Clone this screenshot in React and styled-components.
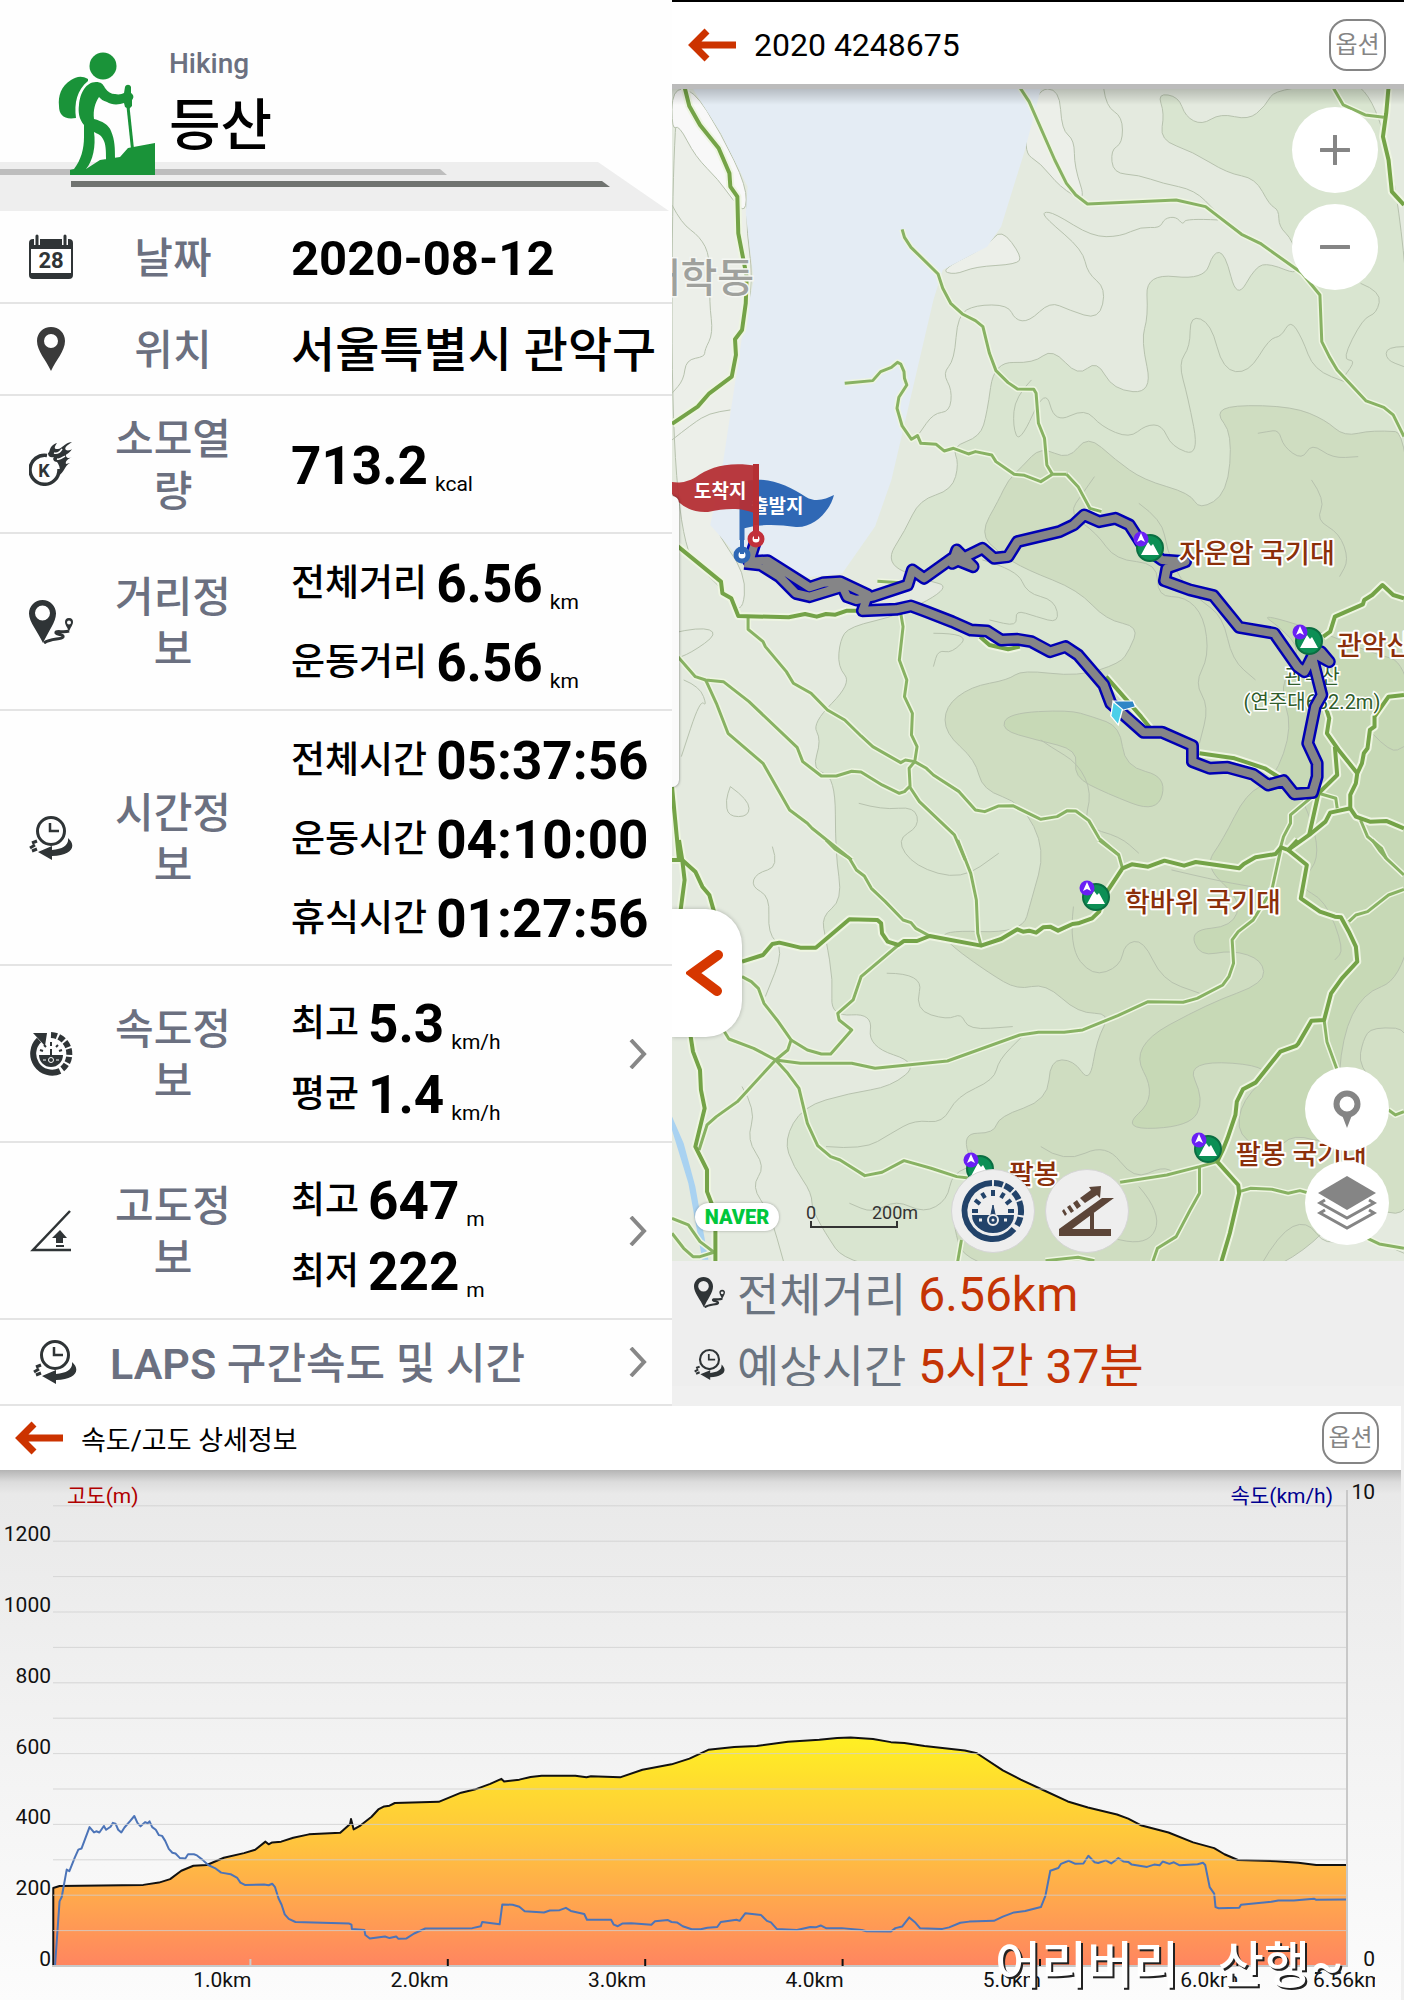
import React from "react";
import styled, { createGlobalStyle } from "styled-components";

const GlobalStyle = createGlobalStyle`
  * {
    box-sizing: border-box;
  }
  body {
    margin: 0;
    background: #f0f0f0;
    color: #000;
    font-family: Roboto, "Noto Sans CJK KR", sans-serif;
  }
  button {
    font-family: inherit;
    cursor: pointer;
  }
  h1, h2, p, ul, dl, dd {
    margin: 0;
    padding: 0;
  }
`;

const Page = styled.div`
  display: flex;
  flex-direction: column;
`;

const Panels = styled.div`
  display: grid;
  grid-template-columns: 672fr 732fr;
`;

const Summary = styled.section`
  background: #fefefe;
  min-width: 0;
`;

const ActivityHeader = styled.header`
  position: relative;
  display: flex;
  gap: 14px;
  height: 211px;
  padding: 52px 0 0 58px;
`;

const Banner = styled.svg`
  position: absolute;
  left: 0;
  bottom: 0;
  width: 100%;
  height: auto;
`;

const HikerIcon = styled.svg`
  position: relative;
  width: 97px;
  height: 124px;
`;

const ActivityTitles = styled.div`
  position: relative;
  margin-top: -8px;
`;

const ActivityType = styled.p`
  color: #6b7080;
  font-size: 28px;
  font-weight: 500;
  line-height: 40px;
`;

const ActivityName = styled.h1`
  font-size: 56px;
  font-weight: 500;
  line-height: 84px;
`;

const InfoRow = styled.div`
  display: grid;
  grid-template-columns: 104px 138px 1fr auto;
  align-items: center;
  height: ${(props) => props.$height}px;
  padding-right: 25px;
  border-bottom: 2px solid #e4e4e4;
`;

const LapsRow = styled(InfoRow)`
  grid-template-columns: 110px 1fr auto;
`;

const IconCell = styled.div`
  display: flex;
  padding-left: ${(props) => (props.$indent ? 33 : 29)}px;
`;

const InfoLabel = styled.h2`
  padding-top: 4px;
  color: #6b7080;
  font-size: ${(props) => (props.$wide ? 43 : 42)}px;
  font-weight: 500;
  line-height: 52px;
  text-align: ${(props) => (props.$wide ? "left" : "center")};
  word-break: break-all;

  strong {
    font-weight: 600;
  }
`;

const Values = styled.div`
  padding: ${(props) => (props.$low ? 12 : 4)}px 0 0 49px;
  white-space: nowrap;
`;

const ValueLine = styled.p`
  display: flex;
  align-items: center;
  height: ${(props) => props.$height}px;
`;

const ValueName = styled.span`
  margin-right: 9px;
  font-size: 37px;
  font-weight: 500;
  line-height: 52px;
`;

const numberSizes = { date: 49, place: 48, value: 53 };

const ValueNumber = styled.strong`
  font-size: ${(props) => numberSizes[props.$kind]}px;
  font-weight: ${(props) => (props.$kind === "place" ? 500 : 700)};
  line-height: 60px;
`;

const Unit = styled.span`
  margin: 36px 0 0 7px;
  font-size: 21px;
  line-height: 26px;
`;

const MoreButton = styled.button`
  display: flex;
  padding: 0;
  border: 0;
  background: none;
`;

const MapPanel = styled.section`
  display: flex;
  flex-direction: column;
  min-width: 0;
`;

const AppBar = styled.header`
  display: flex;
  align-items: center;
  height: ${(props) => (props.$chart ? 64 : 89)}px;
  padding: ${(props) => (props.$chart ? "0 22px 0 15px" : "4px 18px 0 16px")};
  background: #fff;
  border-top: ${(props) => (props.$chart ? "0" : "2px solid #000")};
  border-bottom: ${(props) => (props.$chart ? "0" : "5px solid #bbb")};
`;

const BackButton = styled.button`
  display: flex;
  padding: 0;
  border: 0;
  background: none;
`;

const BarTitle = styled.h2`
  flex: 1;
  margin-left: 18px;
  font-size: ${(props) => (props.$small ? 27 : 32)}px;
  font-weight: 400;
`;

const OptionButton = styled.button`
  width: 57px;
  height: 52px;
  padding: 0;
  border: 2px solid #858585;
  border-radius: 18px;
  background: #fff;
  color: #858585;
  font-size: 24px;
  line-height: 24px;
`;

const MapArea = styled.div`
  position: relative;
  overflow: hidden;
`;

const MapSvg = styled.svg`
  display: block;
  width: 100%;
  height: auto;
`;

const BarShadow = styled.div`
  position: absolute;
  top: 0;
  left: 0;
  right: 0;
  height: 16px;
  background: linear-gradient(rgba(0, 0, 0, 0.2), rgba(0, 0, 0, 0));
`;

const ZoomControls = styled.div`
  position: absolute;
  top: 18px;
  right: 26px;
  display: flex;
  flex-direction: column;
  gap: 11px;
`;

const LayerControls = styled.div`
  position: absolute;
  right: 15px;
  bottom: 16px;
  display: flex;
  flex-direction: column;
  gap: 10px;
`;

const GraphControls = styled.div`
  position: absolute;
  left: 279px;
  bottom: 8px;
  display: flex;
  gap: 10px;
`;

const RoundButton = styled.button`
  display: flex;
  align-items: center;
  justify-content: center;
  width: ${(props) => props.$size}px;
  height: ${(props) => props.$size}px;
  padding: 0;
  border: ${(props) => (props.$gray ? "1px solid #d5d5d5" : "0")};
  border-radius: 50%;
  background: ${(props) => (props.$gray ? "#eee" : "#fff")};
`;

const DrawerTab = styled.button`
  position: absolute;
  left: 0;
  top: 820px;
  display: flex;
  align-items: center;
  width: 70px;
  height: 128px;
  padding: 0 0 0 14px;
  border: 0;
  border-radius: 0 36px 36px 0;
  background: #fff;
  box-shadow: 0 0 4px rgba(0, 0, 0, 0.25);
`;

const DrawerEdge = styled.div`
  position: absolute;
  left: 0;
  top: 407px;
  width: 7px;
  height: 291px;
  border-radius: 0 8px 8px 0;
  background: #fafafa;
  box-shadow: 0 0 3px rgba(0, 0, 0, 0.5);
`;

const NaverBadge = styled.a`
  position: absolute;
  left: 23px;
  bottom: 30px;
  width: 84px;
  height: 28px;
  border-radius: 14px;
  background: #fff;
  box-shadow: 0 0 3px rgba(0, 0, 0, 0.3);
  color: #00c73c;
  font-size: 20px;
  font-weight: 900;
  line-height: 28px;
  text-align: center;
  text-decoration: none;
`;

const TripInfo = styled.dl`
  height: 125px;
  overflow: hidden;
  padding: 0 22px;
  background: #eee;
`;

const TripLine = styled.div`
  display: flex;
  align-items: center;
  height: 72px;
  font-size: 46px;
  line-height: 68px;
  white-space: nowrap;

  svg {
    margin-bottom: 10px;
  }
  dt {
    margin: 0 12px 4px;
    color: #6b7480;
  }
  dd {
    margin-bottom: 4px;
    color: #c43405;
    font-size: 48px;
  }
`;

const ChartPanel = styled.section`
  border-right: 3px solid #f0f0f0;
  background: #fff;
`;

const ChartArea = styled.div`
  background: linear-gradient(#b4b4b4, #dcdcdc 12px, #e9e9e9 24px, #eee 30%, #fcfcfc);
`;

const ChartSvg = styled.svg`
  display: block;
  width: 100%;
  height: auto;
`;

const Signature = styled.g`
  fill: #fff;
  font-size: 50px;
  font-weight: 500;
  filter: drop-shadow(2px 2px 0 #222);
`;

/* ---------- icons ---------- */

const dark = "#2f3436";

const CalendarIcon = () => (
  <svg width="44" height="46" viewBox="0 0 44 46">
    <rect x="1" y="6" width="42" height="38" rx="3" fill="#fff" stroke={dark} strokeWidth="2" />
    <path d="M1 6h42v9H1zM1 39h42v5H1z" fill={dark} />
    <path d="M8 2v9M36 2v9" stroke="#fff" strokeWidth="6" />
    <path d="M8 2v9M36 2v9" stroke={dark} strokeWidth="3" strokeLinecap="round" />
    <text x="22" y="34" fontSize="22" fontWeight="700" textAnchor="middle" fill={dark}>28</text>
  </svg>
);

const PlaceIcon = () => (
  <svg width="44" height="44" viewBox="0 0 44 44">
    <path
      d="M22 0C14 0 8 6 8 14c0 10 9 19 14 30 5-11 14-20 14-30C36 6 30 0 22 0zm0 7a7 7 0 1 1 0 14 7 7 0 0 1 0-14z"
      fill="#3a3a3a"
      fillRule="evenodd"
    />
  </svg>
);

const CalorieIcon = () => (
  <svg width="44" height="44" viewBox="0 0 44 44">
    <path d="M18 13.500A14.500 14.500 0 1 0 30 27" fill="none" stroke={dark} strokeWidth="3.500" />
    <path
      d="M19 11c3-1 0-7 9-10-3 4-3 6 0 6 5 1 6-6 15-7-6 4-8 6-6 8 2 1 5 0 6-1-3 5-7 5-6 7 1 3 4 2 6 1-4 2-7 4-6 7l4-1c-6 3-5 9-12 13 3-5 2-10-1-14-3 0-5-3-3-5-3 1-6 0-6-4z"
      fill={dark}
    />
    <path d="M25 11c3 1 6-1 8-4M28 17c3 1 5-1 8-3" stroke="#fff" strokeWidth="1.500" fill="none" />
    <text x="15" y="35" fontSize="18" fontWeight="700" textAnchor="middle" fill={dark}>K</text>
  </svg>
);

const DistanceIcon = ({ size = 44 }) => (
  <svg width={size} height={size} viewBox="0 0 44 44">
    <path
      d="M13.500 0C6 0 0 6 0 13.500 0 22 9 32 14 43c5-11 13-21 13-29.500C27 6 21 0 13.500 0zm0 5.500a7.500 7.500 0 1 1 0 15 7.500 7.500 0 0 1 0-15z"
      fill={dark}
      fillRule="evenodd"
    />
    <path
      d="M40 18c-3 0-4 2-4 4 0 3 3 6 4 10 1-4 4-7 4-10 0-2-1-4-4-4zm0 2.500a2 2 0 1 1 0 4 2 2 0 0 1 0-4z"
      fill={dark}
      fillRule="evenodd"
    />
    <path d="M40 31c-5 2-14-1-13 2 1 2 8 1 7 4-2 3-12 1-19 6" fill="none" stroke={dark} strokeWidth="3" />
  </svg>
);

const TimeIcon = ({ size = 44 }) => (
  <svg width={size} height={size} viewBox="0 0 44 44">
    <circle cx="22" cy="15" r="13.500" fill="none" stroke={dark} strokeWidth="3" />
    <path d="M21 7v8h9" fill="none" stroke={dark} strokeWidth="2.500" />
    <path d="M39 22c9 8 4 17-16 18v4L9 36l14-6v4c11-1 17-5 16-12z" fill={dark} />
    <path d="M8 25l-5 2M6 29l-5 3M8 33l-5 2" stroke={dark} strokeWidth="3" />
  </svg>
);

const SpeedIcon = () => (
  <svg width="44" height="44" viewBox="0 0 44 44">
    <path d="M10 8A19 19 0 0 0 31 39" fill="none" stroke={dark} strokeWidth="6" />
    <path d="M4 1h14l-2 13z" fill={dark} />
    <path d="M22 3a19 19 0 0 1 11 34" fill="none" stroke={dark} strokeWidth="6" strokeDasharray="6 2" />
    <path d="M10 23h24a12 12 0 0 1-24 0z" fill={dark} />
    <path d="M11 18l3 1M15 13l2 2M22 10v4M29 13l-2 2M33 18l-3 1" stroke={dark} strokeWidth="2" />
    <path d="M22 17v9" stroke={dark} strokeWidth="2" />
    <circle cx="22" cy="28" r="2.500" fill={dark} stroke="#fff" />
    <path d="M14 28h3M27 28h3" stroke="#fff" />
  </svg>
);

const AltitudeIcon = () => (
  <svg width="44" height="44" viewBox="0 0 44 44">
    <path d="M41 2L4 41h38" fill="none" stroke={dark} strokeWidth="2.500" />
    <path d="M31 21l7 8h-4v5h-7v-5h-4zM27 36h8v2h-8z" fill={dark} />
  </svg>
);

const ChevronRight = () => (
  <svg width="18" height="30" viewBox="0 0 18 30">
    <path d="M2 1l13 14L2 29" fill="none" stroke="#878787" strokeWidth="4" />
  </svg>
);

const BackArrow = () => (
  <svg width="48" height="34" viewBox="0 0 48 34">
    <path d="M19 3L5 17l14 14M5 17h43" fill="none" stroke="#cc3300" strokeWidth="7" />
  </svg>
);

const GaugeIcon = () => (
  <svg width="64" height="64" viewBox="0 0 64 64" fill="none" stroke="#22436a">
    <path d="M31 4a28 28 0 1 0 22 46" strokeWidth="6" />
    <path d="M33 4a28 28 0 0 1 22 44" strokeWidth="6" strokeDasharray="9 2 9 2 9 2 14 2" />
    <path d="M11 36h42a21 18 0 0 1-42 0z" fill="#22436a" stroke="none" />
    <path
      d="M11 32h6M14 21l5 4M21 14l3 5M32 11v6M43 14l-3 5M50 21l-5 4M53 32h-6"
      strokeWidth="4"
    />
    <path d="M32 26l3 14h-6z" fill="#22436a" stroke="#22436a" />
    <circle cx="32" cy="41" r="5" fill="#22436a" stroke="#eee" strokeWidth="2" />
    <circle cx="32" cy="41" r="1.500" fill="#eee" stroke="none" />
    <path d="M18 41h3M43 41h3" stroke="#eee" strokeWidth="3" />
  </svg>
);

const SlopeIcon = () => (
  <svg width="56" height="50" viewBox="0 0 56 50" fill="#5c4538">
    <path d="M0 43L43 12h12L13 43h39v7H0z" />
    <path d="M31 27h4v17h-4z" />
    <path d="M21 12l11-8-2-3 12-1-1 12-3-3-12 8zM14 17l4-3 4 6-4 3zM8 21l3-2 4 6-3 2zM3 25l2-2 3 5-2 2z" />
  </svg>
);

const PinIcon = () => (
  <svg width="28" height="38" viewBox="0 0 28 38">
    <circle cx="14" cy="14" r="10.500" fill="none" stroke="#858585" strokeWidth="6" />
    <path d="M9 25h10l-5 13z" fill="#858585" />
  </svg>
);

const LayersIcon = () => (
  <svg width="60" height="54" viewBox="0 0 60 54">
    <path d="M30 0l29 17-29 17L1 17z" fill="#858585" />
    <path d="M8 24l-5 3 27 15 27-15-5-3M8 34l-5 3 27 15 27-15-5-3" fill="none" stroke="#858585" strokeWidth="3" />
  </svg>
);

const Hiker = () => (
  <HikerIcon viewBox="0 0 97 124" fill="#1a9339">
    <circle cx="45" cy="14" r="13.500" />
    <path d="M30 27C23 23 18 25 13 28 3 34 0 44 1 54c0 9 5 14 17 12-2-15 1-28 12-37z" />
    <path d="M38 30c5 0 7 2 9 6 3 4 6 6 10 6 4 1 7 0 9-1l1-6c1-3 5-3 6 0v6c3 2 3 5 1 7v6l-3 3-4-2-1-4c-5 2-13 2-17-1-4-1-6-3-8-5-4 6-6 13-5 22 8 2 15 6 17 12 4 9 4 18 4 28-1 7-9 7-9 0 0-8 0-15-3-20-2-4-5-5-9-7 2 14-1 29-8 37l14-9 20-3 8-9 27-5v32H12v-5l4-1c7-9 10-20 10-32V73c-5-6-6-13-5-20 1-12 7-23 17-23z" />
    <path d="M68 50h3l5 47h-3z" />
  </HikerIcon>
);

/* ---------- summary rows ---------- */

const rows = [
  { icon: <CalendarIcon />, label: "날짜", height: 93, line: 52, kind: "date", values: [{ number: "2020-08-12" }] },
  { icon: <PlaceIcon />, label: "위치", height: 92, line: 48, kind: "place", values: [{ number: "서울특별시 관악구" }] },
  { icon: <CalorieIcon />, label: "소모열량", height: 138, line: 64, values: [{ number: "713.2", unit: "kcal" }] },
  {
    icon: <DistanceIcon />,
    label: "거리정보",
    height: 177,
    line: 79,
    values: [
      { name: "전체거리", number: "6.56", unit: "km" },
      { name: "운동거리", number: "6.56", unit: "km" },
    ],
  },
  {
    icon: <TimeIcon />,
    label: "시간정보",
    height: 255,
    line: 79,
    values: [
      { name: "전체시간", number: "05:37:56" },
      { name: "운동시간", number: "04:10:00" },
      { name: "휴식시간", number: "01:27:56" },
    ],
  },
  {
    icon: <SpeedIcon />,
    label: "속도정보",
    height: 177,
    line: 71,
    more: true,
    values: [
      { name: "최고", number: "5.3", unit: "km/h" },
      { name: "평균", number: "1.4", unit: "km/h" },
    ],
  },
  {
    icon: <AltitudeIcon />,
    label: "고도정보",
    height: 177,
    line: 71,
    more: true,
    values: [
      { name: "최고", number: "647", unit: "m" },
      { name: "최저", number: "222", unit: "m" },
    ],
  },
];

/* ---------- map data ---------- */

// Terrain polygons share one grid for the whole map, from low to high ground
const terrain = [
  ["#eceFe9", "0,267 45,267 160,560 160,700 175,850 135,1180 108,1440 82,1575 160,1720 150,1850 105,1760 0,1630"],
  ["#f8f8f8", "0,267 45,267 105,400 160,560 158,640 130,600 100,540 50,470 15,375 0,390"],
  ["#eceFe9", "780,267 830,267 835,390 862,420 862,500 888,610 830,560 790,490 750,455"],
  ["#eceFe9", "575,810 675,740 705,685 750,770 738,793 650,800 605,825"],
  [
    "#d9e5d0",
    "1040,280 1085,290 1100,350 1135,375 1175,340 1235,360 1270,320 1295,260 1600,240 1600,3850 400,3850 300,3640 300,3580 260,3500 240,3420 280,3320 380,3280 470,3260 530,3190 420,3140 430,3040 340,3050 345,2940 330,2820 320,2750 365,2700 350,2560 350,2330 300,2310 320,2220 300,2170 385,2050 355,2000 360,1920 380,1880 490,1845 600,1760 540,1740 455,1690 500,1590 530,1500 600,1470 615,1390 600,1340 660,1310 675,1240 690,1085 775,1090 815,1045 870,1130 910,1080 945,1170 1030,1180 1005,1020 1020,950 1015,820 1140,840 1160,755 1185,760 1210,900 1250,800 1280,790 1350,830 1330,720 1300,680 1300,630 1280,615 1250,535 1190,520 1115,455 1045,420 1055,340",
  ],
  [
    "#cfddc1",
    "1165,1240 1200,1215 1330,1220 1400,1260 1440,1310 1500,1290 1600,1300 1600,3850 640,3850 590,3620 650,3520 620,3400 690,3400 700,3350 805,3300 810,3180 860,3180 895,3250 910,3120 940,3040 870,3040 800,2950 740,2970 680,2920 600,2840 570,2790 750,2800 770,2700 800,2550 750,2410 665,2370 650,2280 585,2200 585,2120 640,2060 720,2040 750,2010 870,2030 960,1990 980,1950 1000,1880 930,1860 870,1770 760,1710 700,1660 660,1600 700,1500 720,1440 750,1400 790,1340 850,1380 890,1305 950,1380 1010,1440 1110,1480 1130,1530 1190,1480 1200,1300",
  ],
  [
    "#c7d9b6",
    "1260,1840 1300,1880 1350,1950 1300,2060 1330,2180 1290,2340 1230,2380 1180,2520 1140,2600 1220,2700 1200,2780 1110,2790 1130,2870 1200,2850 1265,2880 1270,2950 1150,3010 980,3140 1040,3290 960,3390 1110,3380 1140,3300 1100,3180 1300,3200 1220,3300 1210,3410 1290,3460 1330,3400 1420,3440 1440,3000 1600,2920 1600,2000 1480,1950 1400,1900",
  ],
  ["#d3e0c6", "1480,3120 1500,3080 1600,3090 1600,3640 1500,3640 1440,3500 1500,3420 1540,3300 1470,3200"],
  ["#c7d9b6", "720,2140 850,2130 900,2150 960,2180 970,2300 1060,2330 1040,2440 930,2380 860,2330 870,2250 780,2220 705,2190"],
];

const contours = [
  "0,615 20,670 60,710 82,770 80,910 88,1000 70,1050 70,1070 30,1080 25,1140 0,1180",
  "0,1320 45,1270 80,1240 125,1230",
  "925,267 930,320 965,350 965,430 940,450 945,520 1000,525 1050,550 1120,570 1165,635",
  "1170,660 1100,655 1095,675 1080,650 1055,655 1045,685 1005,680 960,710 900,710 820,640 795,635 800,655 880,750 890,820 930,865 915,960 850,930 810,905 765,965 735,960 720,915 650,915 612,945 605,1080 580,1120 600,1170 595,1235 560,1240 530,1300",
  "770,1140 735,1190 730,1280 745,1330 800,1160 820,1270 885,1225 920,1280 980,1315 1015,1275 1050,1275 1070,1340 1130,1370 1105,1190 1085,1090 1110,1040 1110,945 1155,970 1180,1110 1235,1120 1280,1015 1305,1010 1325,960 1350,1015 1375,1110 1450,1150",
  "1255,1300 1275,1295 1300,1290 1310,1340 1350,1380 1370,1330 1415,1375 1470,1370",
  "1475,850 1520,875 1510,940 1480,955 1435,1080 1465,1080 1440,1130",
  "1568,1040 1530,1040 1530,1080 1568,1100",
  "665,1680 740,1710 760,1780 820,1800 830,1870 780,1850 735,1830 740,1880 680,1860",
  "905,1430 880,1480 850,1540 910,1600 950,1680 1040,1690 1040,1790 1100,1790 1140,1850 1150,1970 1120,2050 1150,2120 1130,2230",
  "1370,1440 1400,1500 1380,1560 1430,1600 1450,1680 1430,1730",
  "1000,1510 1050,1560 1060,1650 1090,1740 1130,1800 1180,1850 1200,1980 1250,2040",
  "560,1900 640,1900 600,1960 570,1950 560,2000",
  "790,2220 810,2240 870,2290 900,2380 880,2480 960,2510 1000,2560",
  "0,1900 60,1880 100,1900 40,1960 0,1980",
  "25,2040 60,2060 75,2120 60,2100 20,2270",
  "125,2360 165,2400 165,2450 120,2450 115,2400 125,2360",
  "400,2410 450,2430 520,2420 530,2480 480,2520 520,2600 620,2640 700,2560",
  "215,2540 230,2600 180,2620 170,2660 210,2690 205,2800 240,2850 200,2990",
  "460,2920 540,2920 520,3030 590,3060 620,3040 635,3090 730,3080",
  "150,3260 180,3330 160,3420 200,3500 170,3560 210,3640 240,3790",
  "330,3440 410,3450 470,3400 520,3360 580,3370 610,3290 690,3240 700,3180 750,3110",
  "640,3450 660,3490 600,3520 590,3600 540,3640 480,3600 430,3640 380,3610",
  "790,3440 840,3490 930,3430 990,3540 1050,3500 1080,3520",
  "1000,3560 1050,3640 1020,3740 900,3700 830,3720",
  "1350,2400 1400,2550 1340,2660 1400,2700 1440,2850 1420,2880",
  "1500,2200 1540,2260 1568,2240",
  "1260,3800 1300,3700 1360,3660 1400,3740 1470,3700 1568,3760",
  "1070,2610 1160,2640 1240,2660",
  "860,2720 850,2840 900,2930 960,2900 970,2830 1010,2820 1050,2940 1130,2980",
];

// Paths are kept per map tile, each tile with its own origin
const tiles = [
  {
    top: -89,
    major: [
      "27,262 37,318 60,375 100,445 123,520 125,560 140,590 142,700 160,830 158,910 150,990 135,1018 137,1065 128,1130 80,1180 55,1220 0,1272",
      "1535,262 1530,340 1523,410 1535,480 1542,575 1568,615",
    ],
    minor: [
      "745,262 765,305 820,480 845,550 865,585 890,612 1080,600 1143,620 1220,703 1260,730 1350,820 1388,885 1392,1025 1408,1070 1425,1110 1487,1203 1525,1222 1545,1245 1568,1310",
      "493,688 498,712 512,742 570,822 580,865 597,910 622,942 650,962 666,980 680,1060 694,1112 720,1148 740,1167 775,1168 780,1180 785,1270 798,1315 803,1395 815,1423",
      "370,1150 430,1142 447,1115 470,1102 483,1087 490,1092 497,1115 498,1135 503,1155 486,1192 482,1225 493,1278 513,1318 526,1307 533,1330 566,1333 583,1353 603,1345 635,1362 650,1355 685,1365 694,1385 733,1423 755,1426 790,1445 815,1423 845,1423",
      "1416,262 1438,315 1485,345 1525,352",
    ],
  },
  {
    top: 351,
    major: [
      "0,305 105,425 108,460 127,475 142,528 250,532 285,522 310,530 330,522 350,524 375,512 400,512",
      "1568,475 1545,465 1522,435 1500,465 1483,480 1480,493 1420,530 1410,575 1395,590",
      "1568,765 1535,770 1505,830 1505,860 1495,870 1490,925 1482,940 1478,970 1468,1000 1465,1030 1453,1065 1453,1105 1410,1118 1400,1145 1365,1185 1320,1230",
      "1400,800 1408,835 1403,880 1428,930 1468,1000",
      "1420,920 1425,1005 1385,1060 1365,1185",
      "1453,1105 1465,1130 1495,1145 1530,1143 1568,1165",
      "0,1040 15,1260",
      "660,590 680,615 720,628 745,620",
      "930,710 1005,830 1025,865",
      "1130,940 1205,955 1270,985 1310,1020",
    ],
    minor: [
      "845,103 870,140 895,205 920,215",
      "440,424 490,428 520,422",
      "0,630 50,710 72,720 110,725 165,785 268,922 280,965 320,1008 352,1008 385,994 405,996 450,1035 487,1060 498,1055 510,1038 508,985 520,965",
      "72,720 95,790 120,880 195,970 252,1110 290,1150 300,1165 385,1260",
      "163,530 163,568 195,605 200,620 245,695 260,730 298,760 333,810 370,840 405,888 430,920 490,968 500,960 520,965",
      "490,520 495,560 487,660 503,720 498,770 515,820 513,885 525,920 520,965 545,985 560,1005 615,1055 650,1110 670,1115 700,1098 730,1097 790,1138 825,1130 847,1112 865,1113 893,1142 915,1195 957,1245",
      "508,1038 530,1085 605,1185 628,1260",
      "1385,1060 1422,1075 1425,1105",
      "1380,1060 1325,1125 1325,1150 1310,1190 1303,1225",
      "1475,1140 1490,1190 1520,1225 1530,1255",
    ],
  },
  {
    top: 751,
    major: [
      "15,0 22,60 50,95 65,140 80,165 90,215",
      "0,60 22,60 27,120 18,215",
      "150,365 195,345 215,312 230,308 275,323 308,323 380,238 440,240 448,250 450,280 462,305 485,315 497,303 525,303 552,288 662,317 705,297 740,268 752,275 765,272 780,278 795,262 810,260 827,272 858,252 870,250 900,235 915,215 925,170 965,85 985,73 1020,80 1055,62 1097,77 1122,66 1215,85 1225,72 1250,52 1293,42 1305,22 1320,30 1340,0",
      "1320,30 1360,75 1347,175 1388,215 1420,230 1433,232 1450,275 1465,320 1468,365 1435,415 1412,460 1397,540 1370,542 1342,610 1337,618 1303,635 1250,728 1223,748 1210,785 1207,825 1190,895 1180,930 1168,965 1213,1035 1215,1060 1195,1180 1177,1265",
      "40,590 45,635 60,690 62,750 70,805 50,920 75,990 75,1055 93,1120 93,1265",
    ],
    minor: [
      "330,0 350,28 380,55 395,90 412,108 427,145 457,185 495,240 512,248 522,265 552,288",
      "612,0 640,100 652,180 655,280 662,317",
      "915,0 957,45 965,85",
      "1305,22 1285,150 1245,240 1213,275 1200,300 1203,370 1193,410 1180,435 1125,475 1095,487 1020,485 955,527 880,570 840,577 785,577 745,585 590,663 435,685 385,670 275,670 222,660",
      "485,315 405,410 388,480 355,520 358,540 385,570 340,642 320,642 290,630 255,600",
      "150,410 170,425 185,445 197,490 225,540 255,600 248,630 222,660 140,785 95,830 75,855 58,930",
      "110,570 122,597 175,625 222,660 248,700 272,745 290,850 312,917 340,950 360,960 413,1007 450,997 497,962 555,985 610,1010 640,1015",
      "960,1027 1060,1005 1130,980 1168,965",
      "1130,980 1130,1060 1110,1110 1080,1190 1040,1225 1030,1265",
      "1397,540 1403,605 1425,690",
      "1450,245 1465,225 1490,215 1535,165 1568,148",
      "1215,1055 1240,1045 1285,1048 1320,1060 1345,1052 1380,1065",
      "1490,1195 1515,1212 1568,1225",
      "1535,810 1550,825 1568,815",
      "0,1135 35,1155 60,1205 90,1237 60,1250 45,1250 25,1225 0,1180",
      "620,1200 612,1265",
      "800,1262 870,1252 905,1262",
      "1500,0 1515,30 1530,55 1568,105",
    ],
  },
];

const track =
  "180,300 165,365 205,362 295,442 325,428 360,425 420,465 408,512 480,508 512,498 545,515 600,545 640,570 675,573 705,600 740,598 770,605 810,635 843,620 870,645 925,735 940,790 1010,877 1050,877 1115,917 1115,965 1152,985 1190,982 1245,1003 1277,1035 1310,1022 1333,1062 1372,1058 1382,1010 1382,970 1362,910 1378,800 1392,765 1372,655 1390,635 1408,665 1375,640 1355,695 1340,680 1290,580 1215,562 1160,467 1110,450 1055,422 1060,385 1100,365 1050,360 1010,320 980,255 950,235 915,245 883,225 860,255 830,275 740,305 720,350 690,355 665,325 600,370 610,330 645,380 600,355 540,415 515,390 505,435 430,470 395,480 375,470 365,440 295,470 265,460 230,410 190,375 155,370";

const pins = [
  [478, 459],
  [637, 552],
  [424, 808],
  [536, 1060],
  [308, 1080],
];

const places = [
  [507, 474, "자운암 국기대"],
  [665, 566, "관악산"],
  [453, 823, "학바위 국기대"],
  [564, 1075, "팔봉 국기대"],
  [337, 1095, "팔봉"],
];

const tileTransform = (top) => `translate(0 ${top}) scale(0.4668 0.3333)`;

// Rounds the corners of a point list by running curves through the midpoints
const smooth = (text, closed) => {
  const points = text.split(" ").map((pair) => pair.split(",").map(Number));
  const mid = (a, b) => `${(a[0] + b[0]) / 2} ${(a[1] + b[1]) / 2}`;
  const last = points[points.length - 1];

  if (closed) {
    const curves = points.map((point, index) => {
      const next = points[(index + 1) % points.length];
      return `Q${point.join(" ")} ${mid(point, next)}`;
    });
    return `M${mid(last, points[0])}${curves.join("")}Z`;
  }

  const curves = points
    .slice(1, -1)
    .map((point, index) => `Q${point.join(" ")} ${mid(point, points[index + 2])}`);
  return `M${points[0].join(" ")}${curves.join("")}L${last.join(" ")}`;
};

const Lines = ({ items, color, width }) => (
  <g fill="none" stroke={color} strokeWidth={width} strokeLinejoin="round">
    {items.map((points, index) => (
      <polyline key={index} points={points} vectorEffect="non-scaling-stroke" />
    ))}
  </g>
);

const TrailMap = () => (
  <MapSvg viewBox="0 0 732 1172" role="img" aria-label="등산 경로 지도">
    <rect width="732" height="1172" fill="#e4eadf" />
    <g transform={tileTransform(-89)} stroke="#b7c2ae">
      {terrain.map(([color, points], index) => (
        <path key={index} d={smooth(points, true)} fill={color} vectorEffect="non-scaling-stroke" />
      ))}
      {contours.map((points, index) => (
        <path key={index} d={smooth(points)} fill="none" vectorEffect="non-scaling-stroke" />
      ))}
      <polygon
        fill="#e4ecf4"
        stroke="none"
        points="45,267 790,267 755,455 705,680 675,740 580,810 560,900 470,1440 435,1580 365,1720 270,1735 160,1700 82,1575 108,1400 150,1010 175,840 158,640 162,560 105,400"
      />
      <path d="M0 3350L25 3430 50 3560 78 3780H65L35 3550 0 3390z" fill="#a9d2f1" stroke="none" />
    </g>
    {tiles.map((tile) => (
      <g key={tile.top} transform={tileTransform(tile.top)}>
        <Lines items={tile.minor} color="#eef5e2" width="6" />
        <Lines items={tile.major} color="#eef5e2" width="8" />
      </g>
    ))}
    {tiles.map((tile) => (
      <g key={tile.top} transform={tileTransform(tile.top)}>
        <Lines items={tile.minor} color="#88b263" width="3" />
        <Lines items={tile.major} color="#74a347" width="4" />
      </g>
    ))}

    <text x="82" y="203" fontSize="40" fontWeight="500" textAnchor="end" fill="#9fa19d" stroke="#f4f6f2" strokeWidth="3" paintOrder="stroke">
      대학동
    </text>
    <g fontSize="20" textAnchor="middle" fill="#2f5d2a" stroke="#fff" strokeWidth="3" paintOrder="stroke">
      <text x="640" y="595">관악산</text>
      <text x="640" y="620">(연주대632.2m)</text>
    </g>

    <g transform={tileTransform(351)}>
      <Lines items={[track]} color="#0000b4" width="13" />
      <Lines items={[track]} color="#858587" width="8" />
      <polygon points="945,783 988,783 993,800 962,812" fill="#2f86c6" stroke="#fff" strokeWidth="3" />
      <polygon points="945,785 965,808 956,855 940,828" fill="#4bcfe9" stroke="#fff" strokeWidth="3" />
    </g>

    <g fontSize="27" fontWeight="500" fill="#8b2f0a" stroke="#fff" strokeWidth="4" strokeLinejoin="round" paintOrder="stroke">
      {places.map(([x, y, name]) => (
        <text key={name} x={x} y={y}>{name}</text>
      ))}
    </g>
    {pins.map(([x, y]) => (
      <g key={x} transform={`translate(${x} ${y})`}>
        <circle r="13" fill="#0c8f55" stroke="#0a6e42" strokeWidth="2" />
        <path d="M-9 7L-2-6 1-2 3-4 9 7z" fill="#fff" />
        <circle cx="-9" cy="-9" r="7.500" fill="#6a1ff5" />
        <path d="M-9-15l4 9-4-2-4 2z" fill="#fff" />
      </g>
    ))}

    <g>
      <path d="M70 393v58" stroke="#2f68b5" strokeWidth="5" />
      <path d="M69 393C95 386 115 396 134 408c10 6 20 2 28-2-4 16-20 33-38 32-20-3-38-3-55 2z" fill="#2f68b5" />
      <circle cx="70" cy="466" r="6" fill="#fff" stroke="#2f68b5" strokeWidth="5" />
      <path d="M70 448v17" stroke="#2f68b5" strokeWidth="4" />
      <text x="79" y="424" fontSize="19" fontWeight="700" fill="#fff">출발지</text>
      <path d="M84 375v72" stroke="#b52f35" strokeWidth="6" />
      <path d="M86 377C56 372 38 378 24 388 14 394 6 394 0 393v12c8 12 20 19 36 18 18-4 36-5 50 3z" fill="#b52f35" opacity="0.950" />
      <circle cx="84" cy="450" r="6" fill="#fff" stroke="#c22f3a" strokeWidth="5" />
      <path d="M84 436v14" stroke="#c22f3a" strokeWidth="4" />
      <text x="22" y="409" fontSize="19" fontWeight="700" fill="#fff">도착지</text>
    </g>

    <path d="M139 1132v6h86v-6" fill="none" stroke="#333" strokeWidth="2" />
    <g fontSize="18" textAnchor="middle" fill="#333">
      <text x="139" y="1130">0</text>
      <text x="223" y="1130">200m</text>
    </g>
  </MapSvg>
);

/* ---------- chart data ---------- */

const elevation =
  "119,1275 133,1270 320,1267 355,1261 380,1252 405,1230 432,1217 462,1215 500,1196 545,1184 570,1175 593,1154 600,1161 608,1156 628,1154 655,1144 690,1135 760,1131 782,1108 784,1095 790,1122 805,1112 830,1089 845,1070 858,1062 870,1060 882,1053 980,1050 1030,1026 1060,1018 1095,1003 1120,990 1126,997 1160,992 1185,985 1210,982 1285,982 1310,986 1320,983 1385,986 1435,966 1500,952 1540,937 1582,914 1640,907 1690,904 1760,893 1830,888 1870,883 1900,882 1950,886 1990,894 2020,896 2065,904 2120,911 2155,916 2182,923 2240,968 2280,992 2330,1019 2385,1049 2430,1065 2495,1083 2520,1094 2550,1112 2610,1130 2665,1156 2712,1171 2735,1187 2765,1202 2850,1205 2900,1209 2940,1215 3007,1215";

const speed =
  "123,1477 133,1310 138,1298 149,1227 155,1231 167,1196 175,1175 182,1172 200,1116 210,1130 215,1127 222,1130 232,1113 237,1123 247,1115 252,1105 258,1107 264,1123 271,1130 278,1117 290,1101 300,1087 307,1105 314,1114 324,1103 330,1106 334,1101 340,1116 348,1123 355,1137 362,1139 369,1152 377,1173 385,1183 392,1185 402,1197 414,1198 420,1187 433,1187 440,1190 452,1201 465,1215 480,1223 494,1235 515,1239 530,1249 537,1261 547,1267 590,1266 600,1268 608,1264 614,1272 622,1302 629,1319 636,1344 645,1356 660,1364 780,1368 785,1371 786,1382 814,1385 816,1398 826,1407 860,1402 870,1406 885,1402 890,1408 908,1407 925,1394 950,1381 1055,1380 1074,1375 1077,1364 1116,1370 1122,1318 1145,1319 1160,1324 1172,1336 1215,1339 1228,1334 1250,1333 1264,1327 1275,1335 1305,1343 1311,1358 1365,1358 1371,1371 1380,1375 1390,1368 1410,1367 1455,1371 1463,1362 1492,1359 1500,1364 1512,1365 1525,1375 1545,1383 1565,1383 1580,1379 1602,1377 1610,1364 1645,1358 1652,1361 1665,1341 1700,1346 1713,1361 1722,1365 1735,1382 1780,1385 1810,1377 1822,1378 1833,1373 1845,1380 1880,1380 1925,1385 1935,1388 1990,1389 2000,1380 2015,1376 2031,1352 2045,1366 2055,1380 2105,1382 2120,1378 2145,1366 2165,1363 2220,1361 2240,1350 2265,1339 2290,1335 2325,1325 2335,1296 2346,1230 2364,1223 2370,1212 2387,1204 2402,1212 2420,1211 2431,1191 2445,1208 2453,1210 2470,1203 2482,1211 2498,1197 2510,1206 2520,1207 2528,1214 2562,1220 2578,1214 2590,1216 2597,1206 2612,1212 2622,1208 2635,1216 2675,1213 2687,1209 2692,1215 2702,1273 2712,1290 2715,1325 2722,1328 2768,1327 2772,1319 2840,1311 2855,1308 2890,1308 2935,1303 2940,1306 3007,1305";

const baseline = 496;
const gridLines = Array.from({ length: 14 }, (_, index) => baseline - index * 35.4);
const altitudeTicks = [0, 200, 400, 600, 800, 1000, 1200];
const distanceTicks = [1, 2, 3, 4, 5, 6];
const chartTransform = "translate(0 -70) scale(0.4477 0.3827)";

const AltitudeChart = () => (
  <ChartSvg viewBox="0 0 1401 530" role="img" aria-label="속도와 고도 그래프">
    <defs>
      <linearGradient id="altitude" x1="0" y1="0" x2="0" y2="1">
        <stop offset="0" stopColor="#fff023" />
        <stop offset="0.450" stopColor="#ffc53d" />
        <stop offset="1" stopColor="#ff8560" />
      </linearGradient>
      <clipPath id="labelEdge">
        <rect x="1300" y="490" width="75" height="40" />
      </clipPath>
    </defs>
    <g transform={chartTransform}>
      <polygon points={`119,1479 ${elevation} 3007,1479`} fill="url(#altitude)" />
      <Lines items={[`119,1479 ${elevation}`]} color="#111" width="2" />
      <Lines items={[speed]} color="#4c74b8" width="2" />
    </g>
    <g stroke="#d0d0d0" strokeOpacity="0.800" strokeWidth="1">
      {gridLines.map((y) => (
        <path key={y} d={`M53 ${y}H1347`} />
      ))}
    </g>
    <path d={`M52 ${baseline}H1347V20`} fill="none" stroke="#c8c8c8" strokeWidth="2" />
    <g strokeWidth="2">
      {distanceTicks.map((km) => (
        <path key={km} d={`M${53 + km * 197.4} 489v7`} stroke={km === 1 ? "#ccc" : "#111"} />
      ))}
    </g>
    <g fontSize="21" fill="#111">
      {altitudeTicks.map((value) => (
        <text key={value} x="51" y={baseline - value * 0.354} textAnchor="end">{value}</text>
      ))}
      {distanceTicks.map((km) => (
        <text key={km} x={54 + km * 197.4} y="517" textAnchor="end">{km}.0km</text>
      ))}
      <text x="1313" y="517" clipPath="url(#labelEdge)">6.56km</text>
      <text x="1375" y="29" textAnchor="end">10</text>
      <text x="1375" y="496" textAnchor="end">0</text>
      <text x="67" y="33" fill="#b00000">고도(m)</text>
      <text x="1333" y="33" textAnchor="end" fill="#000090">속도(km/h)</text>
    </g>
    <Signature>
      <text x="995" y="513">어리버리</text>
      <text x="1218" y="513">산행~</text>
    </Signature>
  </ChartSvg>
);

const App = () => {
  return (
    <Page>
      <GlobalStyle />
      <Panels>
        <Summary>
          <ActivityHeader>
            <Banner viewBox="0 0 672 49">
              <path d="M0 0h598l71 49H0z" fill="#eee" />
              <path d="M0 7h440l7 6H0z" fill="#bdbdbd" />
              <path d="M71 19h531l8 6H71z" fill="#707370" />
            </Banner>
            <Hiker />
            <ActivityTitles>
              <ActivityType>Hiking</ActivityType>
              <ActivityName>등산</ActivityName>
            </ActivityTitles>
          </ActivityHeader>
          {rows.map((row) => (
            <InfoRow key={row.label} $height={row.height}>
              <IconCell>{row.icon}</IconCell>
              <InfoLabel>{row.label}</InfoLabel>
              <Values $low={row.more}>
                {row.values.map((value, index) => (
                  <ValueLine key={index} $height={row.line}>
                    {value.name && <ValueName>{value.name}</ValueName>}
                    <ValueNumber $kind={row.kind || "value"}>{value.number}</ValueNumber>
                    {value.unit && <Unit>{value.unit}</Unit>}
                  </ValueLine>
                ))}
              </Values>
              {row.more && (
                <MoreButton aria-label={row.label}>
                  <ChevronRight />
                </MoreButton>
              )}
            </InfoRow>
          ))}
          <LapsRow $height={86}>
            <IconCell $indent>
              <TimeIcon />
            </IconCell>
            <InfoLabel $wide>
              <strong>LAPS</strong> 구간속도 및 시간
            </InfoLabel>
            <MoreButton aria-label="LAPS">
              <ChevronRight />
            </MoreButton>
          </LapsRow>
        </Summary>

        <MapPanel>
          <AppBar>
            <BackButton aria-label="뒤로">
              <BackArrow />
            </BackButton>
            <BarTitle>2020 4248675</BarTitle>
            <OptionButton>옵션</OptionButton>
          </AppBar>
          <MapArea>
            <TrailMap />
            <BarShadow />
            <DrawerEdge />
            <DrawerTab aria-label="열기">
              <svg width="38" height="48" viewBox="0 0 38 48">
                <path d="M32 6L7 24l24 18" fill="none" stroke="#d63700" strokeWidth="10" strokeLinecap="round" />
              </svg>
            </DrawerTab>
            <ZoomControls>
              <RoundButton $size={86} aria-label="확대">
                <svg width="30" height="30" viewBox="0 0 30 30">
                  <path d="M1 15h28M15 1v28" stroke="#858585" strokeWidth="4" strokeLinecap="round" />
                </svg>
              </RoundButton>
              <RoundButton $size={86} aria-label="축소">
                <svg width="30" height="30" viewBox="0 0 30 30">
                  <path d="M1 15h28" stroke="#858585" strokeWidth="4" strokeLinecap="round" />
                </svg>
              </RoundButton>
            </ZoomControls>
            <NaverBadge href="#">NAVER</NaverBadge>
            <GraphControls>
              <RoundButton $size={84} $gray aria-label="속도">
                <GaugeIcon />
              </RoundButton>
              <RoundButton $size={84} $gray aria-label="경사">
                <SlopeIcon />
              </RoundButton>
            </GraphControls>
            <LayerControls>
              <RoundButton $size={84} aria-label="위치">
                <PinIcon />
              </RoundButton>
              <RoundButton $size={84} aria-label="지도 종류">
                <LayersIcon />
              </RoundButton>
            </LayerControls>
          </MapArea>
          <TripInfo>
            <TripLine>
              <DistanceIcon size={31} />
              <dt>전체거리</dt>
              <dd>6.56km</dd>
            </TripLine>
            <TripLine>
              <TimeIcon size={31} />
              <dt>예상시간</dt>
              <dd>5시간 37분</dd>
            </TripLine>
          </TripInfo>
        </MapPanel>
      </Panels>

      <ChartPanel>
        <AppBar $chart>
          <BackButton aria-label="뒤로">
            <BackArrow />
          </BackButton>
          <BarTitle $small>속도/고도 상세정보</BarTitle>
          <OptionButton>옵션</OptionButton>
        </AppBar>
        <ChartArea>
          <AltitudeChart />
        </ChartArea>
      </ChartPanel>
    </Page>
  );
};

export default App;
